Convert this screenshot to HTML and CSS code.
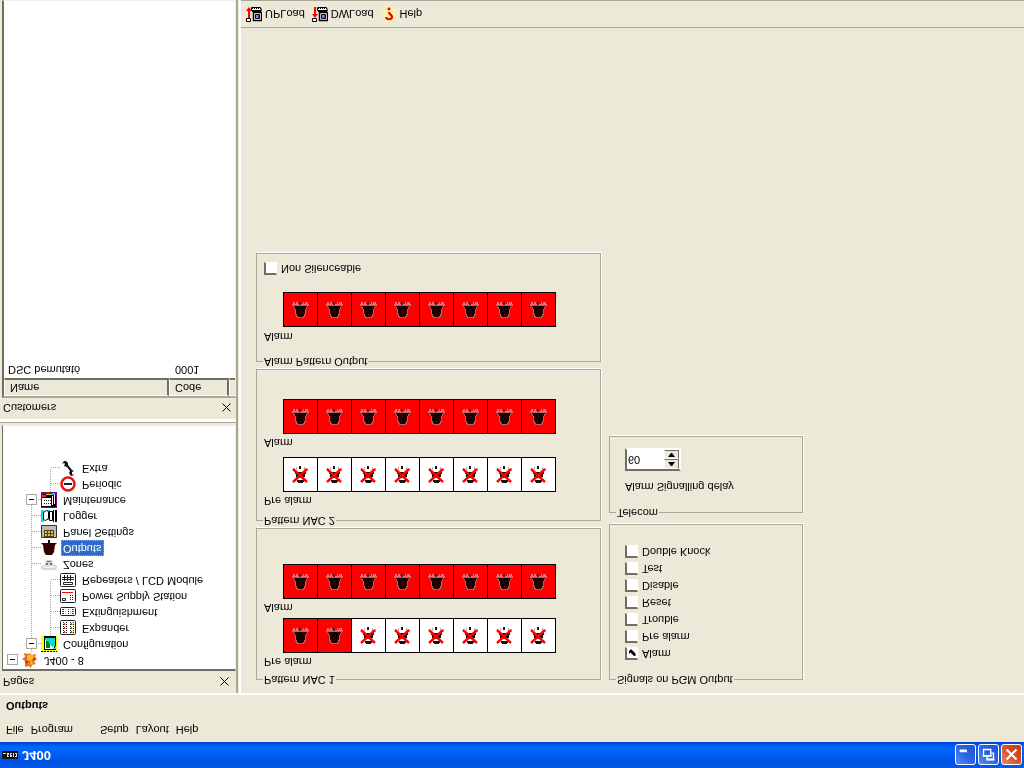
FILE: index.html
```html
<!DOCTYPE html>
<html lang="en">
<head>
<meta charset="utf-8">
<title>J400</title>
<link rel="stylesheet" href="styles.css">
</head>
<body>
<svg class="defs" aria-hidden="true">
  <symbol id="bell" viewBox="0 0 17 17">
    <path fill="#f66" d="M0 13h17v1H0zM1 14h2v2H1zM4 14h2v2H4zM11 14h1v2h-1zM13 14h3v2h-3z"/>
    <path fill="#a66" d="M5 0h7v1h1v2h1v6h1v2h1v1h1v1H0v-1h1v-1h1V9h1V3h1V1h1z"/>
    <path fill="#180000" d="M6 1h5v1h1v2h1v5h1v2h1v1H2v-1h1V9h1V4h1V2h1z"/>
    <path fill="#600" d="M5 4h1v1H5zM8 3h1v1H8zM11 5h1v1h-1zM7 6h1v1H7zM4 8h1v1H4zM9 8h1v1H9zM12 9h1v1h-1zM6 10h1v1H6z"/>
    <path fill="#333" d="M7 13h2v3H7z"/>
  </symbol>
  <symbol id="off" viewBox="0 0 17 17">
    <path fill="#111" d="M6 0h5v1h1v2H5V1h1zM5 5h7v1h1v3h1v2H3V9h1V6h1zM7 14h2v3H7z"/>
    <path fill="#caa" d="M1 12h1v3H1zM4 13h1v3H4zM12 13h1v3h-1zM15 12h1v3h-1z"/>
    <path stroke="#f00" stroke-width="2.400" d="M1 1l14 13M15 1L1 14"/>
  </symbol>
  <symbol id="load" viewBox="0 0 16 16">
    <path fill="#fff" stroke="#000" d="M5.500 11.500h10l-1 3h-9z"/>
    <path stroke="#000" stroke-dasharray="1 1" d="M6 13.500h9"/>
    <path fill="#fff" stroke="#000" stroke-width="1.500" d="M7.500 1.500h8v8h-8z"/>
    <path fill="none" stroke="#000" d="M9.500 3.500h4v4h-4zM6 10.500h9"/>
    <path fill="#fff" stroke="#000" d="M.5.5h4v3h-4z"/>
    <path fill="#0cc" d="M10 4h2v3h-2z"/><path fill="#c0c" d="M12 4h1v3h-1z"/>
  </symbol>
</svg>
<div class="window">
  <header class="titlebar">
    <svg class="app-icon" viewBox="0 0 16 8"><path fill="#111" d="M0 0h16v8H0z"/><path fill="#ddd" d="M1 5h3v1H1zM5 2h2v4H5zM8 2h2v4H8zM11 2h1v4h-1zM13 2h2v4h-2z"/><path fill="#111" d="M6 3h1v1H6zM9 4h1v1H9zM13 3h1v2h-1z"/></svg>
    <h1>J400</h1>
    <button class="win-btn" aria-label="Minimize"><svg viewBox="0 0 21 21"><path fill="#fff" d="M4 13h8v3H4z"/></svg></button>
    <button class="win-btn" aria-label="Restore"><svg viewBox="0 0 21 21"><path fill="none" stroke="#fff" stroke-width="1.500" d="M9 8V5h7v7h-2M5 9h8v7H5z"/><path fill="#fff" d="M4 8h10v2H4zM8 4h9v2H8z"/></svg></button>
    <button class="win-btn close" aria-label="Close"><svg viewBox="0 0 21 21"><path stroke="#fff" stroke-width="2.400" d="M5 5l11 11M16 5L5 16"/></svg></button>
  </header>
  <nav class="menubar">
    <button>File</button><button class="wide">Program</button><button>Setup</button><button>Layout</button><button>Help</button>
  </nav>
  <h2 class="page-title">Outputs</h2>
  <div class="workspace">
    <aside class="sidebar">
      <section class="pages">
        <header class="pane-head"><h3>Pages</h3><button class="pane-close" aria-label="Close Pages"><svg viewBox="0 0 9 9"><path stroke="#000" d="M.5.5l8 8M8.500.5l-8 8"/></svg></button></header>
        <ul class="tree">
          <li><i class="cell box"></i><svg class="ico" viewBox="0 0 16 16"><path fill="#e8701c" d="M3 1l4 1 2-2 1 3 4 1-2 2 3 3-2 2 1 3-4-1-2 2-2-1-4 1 1-4-3-2 3-2z"/><path fill="#ffb52e" d="M5 8l4-1 3 3-1 3-3 1-3-2zM8 3l3 1-1 3-2-1z"/><path fill="#b33a12" d="M3 5h3v2H3zM11 8h2v2h-2z"/></svg><span>J400 - 8</span></li>
          <li><i class="cell"></i><i class="cell tee box"></i><svg class="ico" viewBox="0 0 16 16"><path fill="#ff0" d="M0 0h16v16H0z"/><path fill="#000" d="M3 2h12v14H3z"/><path fill="#fff" d="M4 3h9v11H4z"/><path fill="#0dd" d="M4 14h10V4h-2L5 12H4zM12 3h3v3h-3z"/><path fill="#080" d="M5 4h4v4l-2 3H5z"/><path fill="none" stroke="#000" stroke-dasharray="2 1" d="M0 .5h16"/></svg><span>Configuration</span></li>
          <li><i class="cell"></i><i class="cell line"></i><i class="cell tee"></i><svg class="ico" viewBox="0 0 16 16"><rect x=".5" y="1.500" width="15" height="14" rx="1" fill="#fff" stroke="#222"/><path stroke="#111" stroke-width="1" stroke-dasharray="1 1" d="M3.500 3v11M6.500 3v11M10.500 3v11M13.500 3v11"/><path stroke="#e22" stroke-dasharray="2 2" d="M4.500 3v11M11.500 3v11"/><path stroke="#dc3" stroke-dasharray="1 3" d="M5.500 3v11M12.500 3v11"/></svg><span>Expander</span></li>
          <li><i class="cell"></i><i class="cell line"></i><i class="cell tee"></i><svg class="ico" viewBox="0 0 16 16"><rect x=".5" y="4.500" width="15" height="8" rx="1" fill="#fff" stroke="#222"/><path stroke="#222" stroke-dasharray="1 1" d="M3.500 6v5M8.500 6v5M12.500 6v5"/><path stroke="#fc0" stroke-dasharray="1 1" d="M5.500 6v5M10.500 6v5"/><path stroke="#e22" stroke-dasharray="1 1" d="M2.500 6v5M13.500 6v5"/></svg><span>Extinguishment</span></li>
          <li><i class="cell"></i><i class="cell line"></i><i class="cell tee"></i><svg class="ico" viewBox="0 0 16 16"><rect x=".5" y="1.500" width="15" height="13" rx="1" fill="#fff" stroke="#222"/><path stroke="#e11" d="M2 11.500h11"/><path fill="none" stroke="#222" d="M2.500 3.500h3v2h-3z"/><path stroke="#222" stroke-dasharray="1 1" d="M10.500 4v5M12.500 4v5"/></svg><span>Power Supply Station</span></li>
          <li><i class="cell"></i><i class="cell line"></i><i class="cell end"></i><svg class="ico" viewBox="0 0 16 16"><rect x=".5" y="1.500" width="15" height="13" rx="1" fill="#fff" stroke="#222"/><path fill="none" stroke="#222" d="M3.500 3.500h9v2h-9zM2 8.500h12M2 10.500h12M4.500 7v6M7.500 7v6M10.500 7v6"/></svg><span>Repeaters / LCD Module</span></li>
          <li><i class="cell"></i><i class="cell tee"></i><svg class="ico" viewBox="0 0 16 16"><path fill="#d4d8d0" d="M0 4l2-2h12l2 2v2l-4 2-1 4H5L4 8 0 6z"/><path fill="#eef0ec" d="M2 4h12v2H2z"/><path fill="#667a72" d="M5 7h2v2H5zM9 7h2v2H9zM6 10h4v1H6z"/></svg><span>Zones</span></li>
          <li class="selected"><i class="cell"></i><i class="cell tee"></i><svg class="ico" viewBox="0 0 16 16"><path fill="#300" d="M5 1h6l2 3 1 7 2 2H0l2-2 1-7z"/><path fill="#111" d="M7 13h2v3H7zM4 4h1v2H4zM6 7h2v1H6zM10 3h1v3h-1zM9 10h2v1H9zM4 10h1v1H4z"/></svg><span>Outputs</span></li>
          <li><i class="cell"></i><i class="cell tee"></i><svg class="ico" viewBox="0 0 16 16"><path fill="#bbb" stroke="#333" d="M.5 2.500h15v12H.5z"/><path fill="#541" d="M3 3h10v7H3z"/><path stroke="#db6" stroke-width="2" stroke-dasharray="2 1" d="M4 5h8M4 8h8"/></svg><span>Panel Settings</span></li>
          <li><i class="cell"></i><i class="cell tee"></i><svg class="ico" viewBox="0 0 16 16"><path fill="#0de" d="M0 2h3v12H0zM6 4h3v10H6z"/><path fill="#fff" stroke="#000" d="M2.500 4.500l2-1 3 2v7l-2 1-3-2zM8.500 3.500h3v9h-3z"/><path fill="#000" d="M12 2h1v12h-1zM14 2h2v12h-2z"/></svg><span>Logger</span></li>
          <li><i class="cell"></i><i class="cell end box"></i><svg class="ico" viewBox="0 0 16 16"><path fill="#808" d="M0 0h16v16H0z"/><path fill="#000" d="M0 1h15v11l-2 2H2z"/><path fill="#fff" d="M1 2h9v8H1zM11 3h1v9h-1zM13 4h1v9h-1z"/><path fill="#e22" d="M1 11h4v2H1z"/><path fill="#dd0" d="M5 13h6v1H5z"/><path fill="#0cd" d="M11 13h3v2h-3z"/><path stroke="#222" stroke-dasharray="1 1" d="M3 4.500h7M3 7.500h7"/></svg><span>Maintenance</span></li>
          <li><i class="cell"></i><i class="cell"></i><i class="cell tee"></i><svg class="ico" viewBox="0 0 16 16"><circle cx="8" cy="8" r="6.500" fill="#fff" stroke="#e11" stroke-width="2.500"/><path fill="#222" d="M4 7h8v2H4z"/></svg><span>Periodic</span></li>
          <li><i class="cell"></i><i class="cell"></i><i class="cell end"></i><svg class="ico" viewBox="0 0 16 16"><path fill="#111" d="M2 12l2 1 1-1-1-2 3-1 3-4-1-2 2-3 3 1-2 1v2l2 1-2 1-4 5v2l-2 2H4z"/></svg><span>Extra</span></li>
        </ul>
      </section>
      <section class="customers">
        <header class="pane-head"><h3>Customers</h3><button class="pane-close" aria-label="Close Customers"><svg viewBox="0 0 9 9"><path stroke="#000" d="M.5.5l8 8M8.500.5l-8 8"/></svg></button></header>
        <div class="list">
          <table>
            <thead><tr><th class="name">Name</th><th class="code">Code</th><th></th></tr></thead>
            <tbody><tr><td>DSC bemutató</td><td>0001</td><td></td></tr></tbody>
          </table>
        </div>
      </section>
    </aside>
    <main class="content">
      <div class="groups">
        <div class="column patterns">
          <fieldset class="nac">
            <legend>Pattern NAC 1</legend>
            <p>Pre alarm</p>
            <div class="strip"><button class="on"><svg><use href="#bell"/></svg></button><button class="on"><svg><use href="#bell"/></svg></button><button><svg><use href="#off"/></svg></button><button><svg><use href="#off"/></svg></button><button><svg><use href="#off"/></svg></button><button><svg><use href="#off"/></svg></button><button><svg><use href="#off"/></svg></button><button><svg><use href="#off"/></svg></button></div>
            <p>Alarm</p>
            <div class="strip"><button class="on"><svg><use href="#bell"/></svg></button><button class="on"><svg><use href="#bell"/></svg></button><button class="on"><svg><use href="#bell"/></svg></button><button class="on"><svg><use href="#bell"/></svg></button><button class="on"><svg><use href="#bell"/></svg></button><button class="on"><svg><use href="#bell"/></svg></button><button class="on"><svg><use href="#bell"/></svg></button><button class="on"><svg><use href="#bell"/></svg></button></div>
          </fieldset>
          <fieldset class="nac spaced">
            <legend>Pattern NAC 2</legend>
            <p>Pre alarm</p>
            <div class="strip"><button><svg><use href="#off"/></svg></button><button><svg><use href="#off"/></svg></button><button><svg><use href="#off"/></svg></button><button><svg><use href="#off"/></svg></button><button><svg><use href="#off"/></svg></button><button><svg><use href="#off"/></svg></button><button><svg><use href="#off"/></svg></button><button><svg><use href="#off"/></svg></button></div>
            <p>Alarm</p>
            <div class="strip"><button class="on"><svg><use href="#bell"/></svg></button><button class="on"><svg><use href="#bell"/></svg></button><button class="on"><svg><use href="#bell"/></svg></button><button class="on"><svg><use href="#bell"/></svg></button><button class="on"><svg><use href="#bell"/></svg></button><button class="on"><svg><use href="#bell"/></svg></button><button class="on"><svg><use href="#bell"/></svg></button><button class="on"><svg><use href="#bell"/></svg></button></div>
          </fieldset>
          <fieldset class="output">
            <legend>Alarm Pattern Output</legend>
            <p>Alarm</p>
            <div class="strip"><button class="on"><svg><use href="#bell"/></svg></button><button class="on"><svg><use href="#bell"/></svg></button><button class="on"><svg><use href="#bell"/></svg></button><button class="on"><svg><use href="#bell"/></svg></button><button class="on"><svg><use href="#bell"/></svg></button><button class="on"><svg><use href="#bell"/></svg></button><button class="on"><svg><use href="#bell"/></svg></button><button class="on"><svg><use href="#bell"/></svg></button></div>
            <label class="check"><input type="checkbox">Non Silenceable</label>
          </fieldset>
        </div>
        <div class="column">
          <fieldset class="signals">
            <legend>Signals on PGM Output</legend>
            <label class="check"><input type="checkbox" checked>Alarm</label>
            <label class="check"><input type="checkbox">Pre alarm</label>
            <label class="check"><input type="checkbox">Trouble</label>
            <label class="check"><input type="checkbox">Reset</label>
            <label class="check"><input type="checkbox">Disable</label>
            <label class="check"><input type="checkbox">Test</label>
            <label class="check"><input type="checkbox">Double Knock</label>
          </fieldset>
          <fieldset class="telecom">
            <legend>Telecom</legend>
            <label class="field-label" for="delay">Alarm Signalling delay</label>
            <div class="spin">
              <input id="delay" type="text" value="60">
              <div class="arrows"><button aria-label="Decrease"><svg viewBox="0 0 7 4"><path d="M0 0h7L4 4H3z"/></svg></button><button aria-label="Increase"><svg viewBox="0 0 7 4"><path d="M0 0h7L4 4H3z"/></svg></button></div>
            </div>
          </fieldset>
        </div>
      </div>
      <footer class="toolbar">
        <button><svg viewBox="0 0 16 16"><use href="#load"/><path fill="#f00" d="M2 4h2v7h2l-3 4-3-4h2z"/></svg>UPLoad</button>
        <button><svg viewBox="0 0 16 16"><use href="#load"/><path fill="#f00" d="M2 15h2V8h2L3 4 0 8h2z"/></svg>DWLoad</button>
        <button><svg viewBox="0 0 16 16"><circle cx="8" cy="8" r="7.500" fill="#f8f3a4"/><path fill="none" stroke="#e00" stroke-width="2.200" d="M5 5c0-3 6-3 6 0S8 7 8 10"/><circle cx="8" cy="13" r="1.500" fill="#e00"/></svg>Help</button>
      </footer>
    </main>
  </div>
</div>
</body>
</html>
```

FILE: styles.css
```css
* { box-sizing: border-box; }

body {
  margin: 0;
  background: #ece9d8;
  color: #000;
  font: 11px/13px "Liberation Sans", Arial, sans-serif;
}

h1, h2, h3, p, ul, fieldset, legend { margin: 0; padding: 0; }

button, input {
  margin: 0;
  padding: 0;
  border: 0;
  background: none;
  color: inherit;
  font: inherit;
}

svg { display: block; }
.defs { position: absolute; width: 0; height: 0; }

/* The whole window is mirrored top to bottom. */
.window {
  display: flex;
  flex-direction: column;
  height: 100vh;
  overflow: hidden;
  transform: scaleY(-1);
}

.titlebar {
  display: flex;
  align-items: center;
  gap: 2px;
  height: 26px;
  flex: none;
  padding: 0 2px;
  background: linear-gradient(#0058ea, #0054e3 30%, #0066ff 70%, #0060f4 85%, #003dd0);
  color: #fff;
}
.titlebar h1 {
  flex: 1;
  padding-left: 2px;
  font: bold 13px/16px "Liberation Sans", Arial, sans-serif;
}
.app-icon { width: 16px; height: 8px; }
.win-btn {
  width: 21px;
  height: 21px;
  border: 1px solid #fff;
  border-radius: 3px;
  background: linear-gradient(135deg, #5a8cf5, #2a63e6 50%, #2350d0);
}
.win-btn.close { background: linear-gradient(135deg, #e88a6c, #dc4d22 50%, #c03a12); }
.win-btn svg { width: 19px; height: 19px; }

.menubar {
  display: flex;
  gap: 7px;
  flex: none;
  padding: 6px 6px 5px;
}
.menubar .wide { margin-right: 20px; }

.page-title {
  flex: none;
  padding: 6px 6px 4px;
  font: bold 11px/13px "Liberation Sans", Arial, sans-serif;
}

.workspace {
  display: grid;
  grid-template-columns: 238px 1fr;
  gap: 1px;
  flex: 1;
  min-height: 0;
  border-top: 2px solid #fff;
}

.sidebar {
  display: flex;
  flex-direction: column;
  min-height: 0;
  border-right: 2px solid #aca899;
}
.pane-head {
  display: flex;
  align-items: center;
  justify-content: space-between;
  height: 22px;
  padding: 0 7px 0 3px;
}
.pane-head h3 { font: inherit; }
.pane-close svg { width: 9px; height: 9px; }

.tree {
  height: 246px;
  margin-left: 2px;
  padding-top: 1px;
  border: 2px solid #716f64;
  border-left-width: 1px;
  border-right: 1px solid #f1efe2;
  border-bottom: 1px solid #f1efe2;
  background: #fff;
  list-style: none;
}
.tree li { display: flex; height: 16px; }
.tree .ico { width: 16px; height: 16px; margin-right: 4px; }
.tree span { padding: 1px 2px 2px; }
.tree .selected span {
  outline: 1px dotted #d8a050;
  outline-offset: -1px;
  background: #316ac5;
  color: #fff;
}
.cell {
  --h: repeating-linear-gradient(90deg, #aca899 0 1px, transparent 1px 2px);
  --v: repeating-linear-gradient(#aca899 0 1px, transparent 1px 2px);
  display: grid;
  place-items: center;
  width: 19px;
  height: 16px;
  background-repeat: no-repeat;
}
.line { background-image: var(--v); background-size: 1px 16px; background-position: 9px 0; }
.tee { background-image: var(--v), var(--h); background-size: 1px 16px, 9px 1px; background-position: 9px 0, 10px 8px; }
.end { background-image: var(--v), var(--h); background-size: 1px 8px, 9px 1px; background-position: 9px 0, 10px 8px; }
.box::before {
  content: "";
  width: 9px;
  height: 9px;
  border: 1px solid #aca899;
  background: linear-gradient(#000, #000) center / 5px 1px no-repeat #fff;
}

.customers {
  display: flex;
  flex-direction: column;
  flex: 1;
  min-height: 0;
  margin-top: 2px;
  border-top: 1px solid #aca899;
  box-shadow: inset 0 3px #fff;
}
.customers .pane-head { height: 24px; padding: 5px 5px 0 3px; }
.list {
  flex: 1;
  margin-left: 2px;
  border: 2px solid #716f64;
  border-top-color: #aca899;
  border-right: 1px solid #f1efe2;
  border-bottom: 1px solid #f1efe2;
  background: #fff;
}
.list table { width: 100%; border-collapse: separate; border-spacing: 0; table-layout: fixed; }
.list th {
  height: 18px;
  padding: 0 5px;
  border: 1px solid #fff;
  border-right: 2px solid #716f64;
  border-bottom: 2px solid #716f64;
  background: #ece9d8;
  font-weight: normal;
  text-align: left;
}
.list th:last-child { border-right: 0; padding: 0; }
.list .name { width: 165px; }
.list .code { width: 60px; }
.list td { padding: 2px 4px; }
.list td:nth-child(2) { padding-left: 6px; }

.content {
  display: flex;
  flex-direction: column;
  min-width: 0;
  border-left: 2px solid #fff;
}
.groups {
  display: flex;
  align-items: flex-start;
  gap: 8px;
  flex: 1;
  padding: 7px 15px;
}
.column {
  display: flex;
  flex-direction: column;
  gap: 1px;
  width: 194px;
}
.patterns { width: 345px; }
.column fieldset {
  min-width: 0;
  border: 1px solid #aca899;
  box-shadow: 1px 1px #fff;
}
.column legend { margin-left: 6px; padding: 0 1px; }
.patterns p { padding-left: 7px; }
.nac { height: 158px; padding-top: 5px; }
.nac .strip { margin: 2px 0 4px 26px; }
.nac.spaced { padding-top: 7px; }
.nac.spaced .strip { margin-bottom: 8px; }
.output { height: 115px; padding-top: 12px; }
.output .strip { margin: 3px 0 15px 26px; }
.output .check { margin-left: 7px; }

.strip {
  display: flex;
  width: 273px;
  border: 1px solid #000;
}
.strip button {
  display: grid;
  place-items: center;
  flex: 1;
  height: 33px;
  border-right: 1px solid #000;
  background: #fff;
}
.strip button:last-child { border-right: 0; }
.strip .on { background: #f00; }
.strip svg { width: 17px; height: 17px; }

.check { display: flex; align-items: center; gap: 4px; height: 17px; }
.check input {
  display: grid;
  place-items: center;
  appearance: none;
  width: 13px;
  height: 13px;
  border: 2px solid #716f64;
  border-right: 1px solid #fff;
  border-bottom: 1px solid #fff;
  background: #fff;
}
.check input:checked::before {
  content: "";
  width: 7px;
  height: 7px;
  background: #000;
  clip-path: polygon(0 2px, 2px 4px, 6px 0, 7px 0, 7px 3px, 3px 7px, 2px 7px, 0 5px);
}

.signals { height: 162px; padding-top: 11px; }
.signals .check { margin-left: 15px; }
.telecom { height: 83px; padding-top: 13px; }
.column .telecom { margin-top: 4px; }
.field-label { margin-left: 15px; }
.spin {
  display: flex;
  width: 56px;
  height: 23px;
  margin: 9px 0 0 15px;
  border: 2px solid #716f64;
  border-right: 2px solid #fff;
  border-bottom: 2px solid #fff;
  background: #fff;
}
.spin input { flex: 1; min-width: 0; padding-left: 1px; }
.arrows { display: flex; flex-direction: column; width: 15px; }
.arrows button {
  display: grid;
  place-items: center;
  flex: 1;
  border: 1px solid #fff;
  border-right-color: #716f64;
  border-bottom-color: #716f64;
  background: #ece9d8;
}
.arrows svg { width: 7px; height: 4px; }
.arrows button:first-child svg { transform: scaleY(-1); }

.toolbar {
  display: flex;
  align-items: center;
  gap: 7px;
  height: 28px;
  padding: 0 5px;
  border-top: 1px solid #aca899;
  border-bottom: 1px solid #aca899;
}
.toolbar button { display: flex; align-items: center; gap: 3px; }
.toolbar svg { width: 16px; height: 16px; }
```
